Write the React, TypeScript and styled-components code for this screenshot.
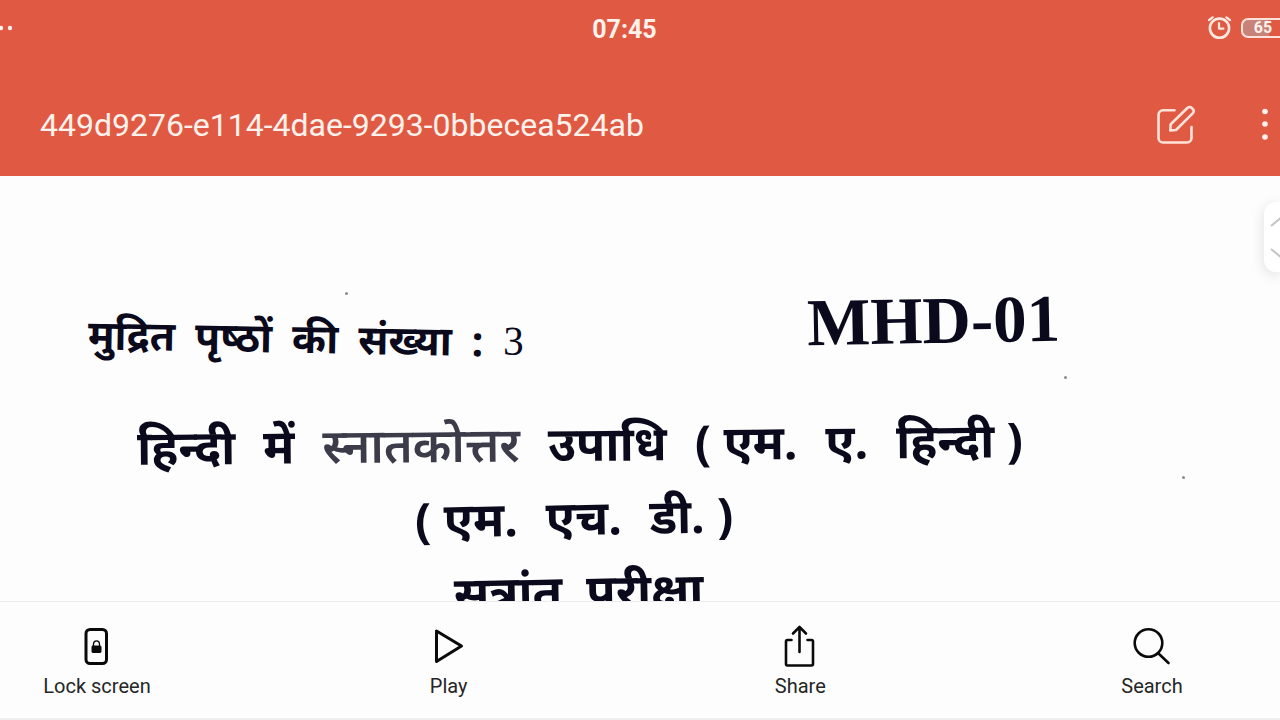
import React from "react";
import styled, { createGlobalStyle } from "styled-components";

const GlobalStyle = createGlobalStyle`
  *, *::before, *::after { box-sizing: border-box; }
  body { margin: 0; background: #fdfdfd; }
`;

const Screen = styled.div`
  display: flex;
  flex-direction: column;
  height: 100vh;
  overflow: hidden;
  font-family: Roboto, "Liberation Sans", sans-serif;
  color: #262626;
`;

const Header = styled.header`
  flex: none;
  background: #e05a43;
  color: #fff1ec;
`;

const StatusBar = styled.div`
  display: grid;
  grid-template-columns: 1fr auto 1fr;
  align-items: center;
  height: 56px;
`;

const SignalDots = styled.svg`
  display: block;
`;

const Clock = styled.time`
  margin-right: 31px;
  padding-top: 4px;
  font-size: 25px;
  line-height: 32px;
  font-weight: 700;
`;

const StatusIcons = styled.div`
  display: flex;
  justify-content: flex-end;
  align-items: center;
  gap: 9px;
`;

const Battery = styled.span`
  display: flex;
  align-items: center;
  justify-content: center;
  width: 39px;
  height: 20px;
  padding-left: 3px;
  border: 2px solid #ffe3da;
  border-right: 0;
  border-radius: 7px 0 0 7px;
  background: linear-gradient(90deg, #c88278 26px, #e05a43 26px);
  font-size: 16px;
  line-height: 16px;
  font-weight: 700;
`;

const TitleBar = styled.div`
  display: flex;
  align-items: center;
  height: 120px;
  padding: 18px 0 0 40px;
`;

const FileName = styled.h1`
  flex: 1;
  margin: 0;
  font-size: 32px;
  line-height: 40px;
  font-weight: 400;
`;

const IconButton = styled.button<{ $gap?: number }>`
  display: flex;
  margin: 0 0 0 ${(p) => p.$gap ?? 0}px;
  padding: 0;
  border: 0;
  background: none;
  color: inherit;
`;

const Viewer = styled.main`
  position: relative;
  flex: 1;
  min-height: 0;
  overflow: hidden;
  background: #fdfdfd;
`;

const Sheet = styled.article`
  display: flex;
  flex-direction: column;
  padding-top: 110px;
  font-family: "Noto Sans", "Noto Sans Devanagari", "Liberation Sans", sans-serif;
  color: #0b0a1c;
`;

const TopRow = styled.div`
  display: flex;
  justify-content: space-between;
  align-items: flex-start;
  padding: 0 220px 32px 88px;
`;

const Line = styled.p<{ $indent?: number; $gap: number; $size: number; $tilt?: number }>`
  display: flex;
  gap: ${(p) => p.$gap}px;
  width: max-content;
  margin: 0 0 0 ${(p) => p.$indent ?? 0}px;
  font-size: ${(p) => p.$size}px;
  line-height: 74px;
  font-weight: 700;
  white-space: nowrap;
  rotate: ${(p) => p.$tilt ?? 0}deg;
`;

const PageCount = styled(Line)`
  padding-top: 14px;
`;

const Faded = styled.span`
  color: #3c3b4a;
  font-weight: 600;
`;

const Numeral = styled.span`
  font-family: "Liberation Serif", serif;
  font-weight: 400;
`;

const PaperCode = styled.h2`
  margin: 0;
  font-family: "Liberation Serif", serif;
  font-size: 67px;
  line-height: 68px;
  font-weight: 700;
  rotate: -1deg;
`;

const Speck = styled.i<{ $x: number; $y: number }>`
  position: absolute;
  left: ${(p) => p.$x}px;
  top: ${(p) => p.$y}px;
  width: 3px;
  height: 3px;
  border-radius: 50%;
  background: #8a8a8e;
`;

const ScrollHandle = styled.button`
  position: absolute;
  top: 26px;
  right: 0;
  width: 16px;
  height: 70px;
  padding: 0;
  border: 0;
  border-radius: 12px 0 0 12px;
  background: #fff;
  box-shadow: 0 3px 14px rgba(0, 0, 0, 0.13);
`;

const Toolbar = styled.nav`
  flex: none;
  display: flex;
  justify-content: space-between;
  height: 119px;
  padding: 22px 64px 0 33px;
  border-top: 1px solid #ececec;
  border-bottom: 2px solid #efefef;
  background: #fdfdfd;
`;

const Tool = styled.button`
  display: flex;
  flex-direction: column;
  align-items: center;
  gap: 6px;
  width: 128px;
  padding: 0;
  border: 0;
  background: none;
  color: inherit;
  font: 400 20px/24px Roboto, "Liberation Sans", sans-serif;
  white-space: nowrap;
`;

const ToolIcon = styled.svg`
  display: block;
  width: 44px;
  height: 44px;
  fill: none;
  stroke: #0a0a0a;
  stroke-width: 2.6;
  stroke-linecap: round;
  stroke-linejoin: round;
`;

export default function App() {
  return (
    <Screen>
      <GlobalStyle />
      <Header>
        <StatusBar>
          <SignalDots width="14" height="8" fill="#fff1ec" aria-hidden="true">
            <circle cx="1" cy="4" r="2.2" />
            <circle cx="10" cy="4" r="2.2" />
          </SignalDots>
          <Clock>07:45</Clock>
          <StatusIcons>
            <svg width="24" height="24" viewBox="0 0 24 24" fill="none" stroke="#ffe9e1" strokeLinecap="round" strokeLinejoin="round" aria-label="Alarm set">
              <circle cx="11.5" cy="12.2" r="9.6" strokeWidth="2.6" />
              <path d="M11 7v5.600h4.400" strokeWidth="2.2" />
              <path d="M1 4.200 4.600 1.300M22 4.200l-3.600-2.900" strokeWidth="2.2" />
            </svg>
            <Battery>65</Battery>
          </StatusIcons>
        </StatusBar>
        <TitleBar>
          <FileName>449d9276-e114-4dae-9293-0bbecea524ab</FileName>
          <IconButton aria-label="Edit">
            <svg width="40" height="40" viewBox="0 0 40 40" fill="none" stroke="#ffe3da" strokeWidth="2.6" strokeLinecap="round" strokeLinejoin="round">
              <path d="M18.500 5.300H7a4.500 4.500 0 0 0-4.500 4.500V33a4.500 4.500 0 0 0 4.500 4.500H31a4.500 4.500 0 0 0 4.500-4.500V22" />
              <path d="M14.700 19.200 31.600 2.800a2.800 2.800 0 0 1 4 0l1.300 1.300a2.800 2.800 0 0 1 0 4L20 25l-5.700.5z" />
            </svg>
          </IconButton>
          <IconButton $gap={60} aria-label="More options">
            <svg width="24" height="40" viewBox="0 0 24 40" fill="#fff1ec">
              <circle cx="9" cy="6.500" r="2.800" />
              <circle cx="9" cy="19" r="2.800" />
              <circle cx="9" cy="32" r="2.800" />
            </svg>
          </IconButton>
        </TitleBar>
      </Header>

      <Viewer>
        <Sheet>
          <TopRow>
            <PageCount $gap={20} $size={41} $tilt={1}>
              <span>मुद्रित</span>
              <span>पृष्&zwj;ठों</span>
              <span>की</span>
              <span>संख्या</span>
              <span>:</span>
              <Numeral>3</Numeral>
            </PageCount>
            <PaperCode>MHD-01</PaperCode>
          </TopRow>
          <Line $indent={137} $gap={28} $size={48} $tilt={-0.5}>
            <span>हिन्दी</span>
            <span>में</span>
            <Faded>स्नातकोत्तर</Faded>
            <span>उपाधि</span>
            <span>( एम.</span>
            <span>ए.</span>
            <span>हिन्दी )</span>
          </Line>
          <Line $indent={415} $gap={28} $size={48} $tilt={-1}>
            <span>( एम.</span>
            <span>एच.</span>
            <span>डी. )</span>
          </Line>
          <Line $indent={454} $gap={24} $size={48} $tilt={-1}>
            <span>सत्रांत</span>
            <span>परीक्षा</span>
          </Line>
        </Sheet>
        <Speck $x={345} $y={116} />
        <Speck $x={1064} $y={200} />
        <Speck $x={1182} $y={300} />
        <ScrollHandle aria-label="Scroll pages">
          <svg width="16" height="70" fill="none" stroke="#c4c4c4" strokeWidth="2">
            <path d="M7 24 18 15M7 47l11 9" />
          </svg>
        </ScrollHandle>
      </Viewer>

      <Toolbar>
        <Tool>
          <ToolIcon viewBox="0 0 44 44">
            <rect x="11" y="5.500" width="20.500" height="34" rx="4" strokeWidth="3" />
            <rect x="17" y="22" width="9" height="6.500" rx="0.800" fill="#0a0a0a" strokeWidth="1" />
            <path d="M18.500 22v-2a3 3.200 0 0 1 6 0v2" strokeWidth="1.300" />
          </ToolIcon>
          Lock screen
        </Tool>
        <Tool>
          <ToolIcon viewBox="0 0 44 44">
            <path d="M9.500 7v30.500l25-15.500z" strokeWidth="3" />
          </ToolIcon>
          Play
        </Tool>
        <Tool>
          <ToolIcon viewBox="0 0 44 44">
            <path d="M13.500 16H9.500a1.500 1.500 0 0 0-1.500 1.500V40a1.500 1.500 0 0 0 1.500 1.500H33.500a1.500 1.500 0 0 0 1.500-1.500V17.500a1.500 1.500 0 0 0-1.500-1.500H29.500M21.500 28V3.500M15 9.500 21.500 3l6.500 6.500" />
          </ToolIcon>
          Share
        </Tool>
        <Tool>
          <ToolIcon viewBox="0 0 44 44">
            <circle cx="18.500" cy="19" r="13.800" />
            <path d="M28.500 29.500 38.500 39" />
          </ToolIcon>
          Search
        </Tool>
      </Toolbar>
    </Screen>
  );
}
